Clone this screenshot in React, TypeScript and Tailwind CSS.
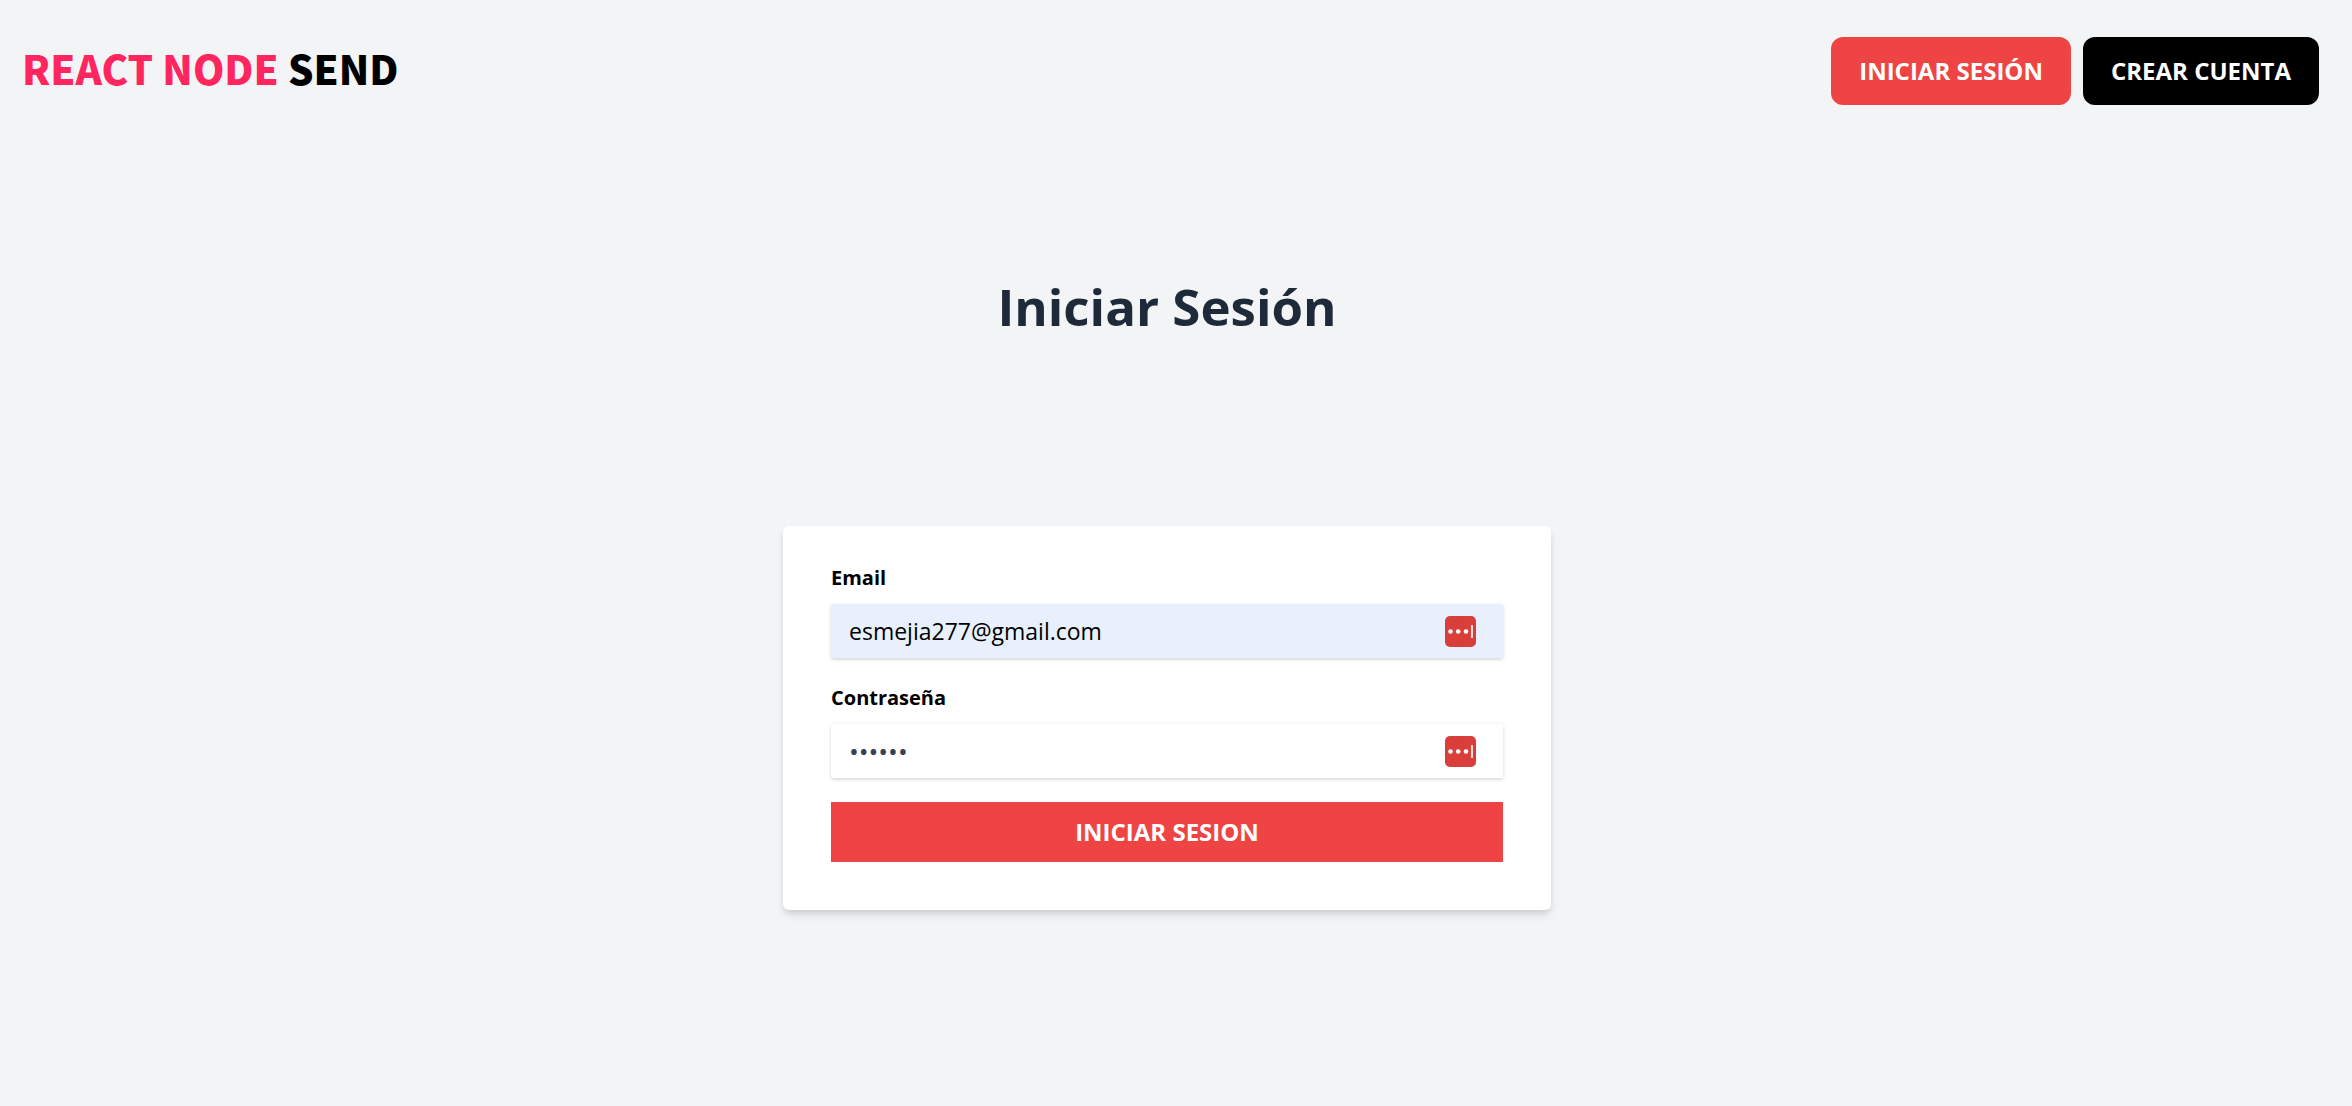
import { useState } from "react";

function PasswordManagerIcon() {
  return (
    <svg viewBox="0 0 31 31" className="size-[31px]" aria-hidden="true">
      <rect width="31" height="31" rx="5" fill="#d83f3b" />
      <circle cx="5.5" cy="15.5" r="2.3" fill="#fff" />
      <circle cx="13.2" cy="15.5" r="2.3" fill="#fff" />
      <circle cx="21" cy="15.5" r="2.3" fill="#fff" />
      <rect x="26" y="9" width="2" height="13" rx="0.6" fill="#fbdcdb" />
    </svg>
  );
}

type FieldProps = {
  id: string;
  label: string;
  type: string;
  initial: string;
  inputClass: string;
};

function Field({ id, label, type, initial, inputClass }: FieldProps) {
  const [value, setValue] = useState(initial);
  return (
    <div className="mb-6">
      <label htmlFor={id} className="mb-2.5 block text-[20px] leading-8 font-bold text-black">
        {label}
      </label>
      <div className="relative">
        <input
          id={id}
          type={type}
          value={value}
          onChange={(e) => setValue(e.target.value)}
          className={`block h-[54px] w-full rounded-xs px-[18px] shadow-[0_1px_4px_rgba(0,0,0,0.1),0_2px_3px_rgba(0,0,0,0.08)] outline-none ${inputClass}`}
        />
        <button
          type="button"
          aria-label={`Autocompletar ${label}`}
          className="absolute top-3 right-[27px]"
        >
          <PasswordManagerIcon />
        </button>
      </div>
    </div>
  );
}

export default function App() {
  return (
    <div className="min-h-screen bg-gray-100 pr-[18px] font-['Open_Sans',sans-serif]">
      <header className="flex items-start justify-between pt-[37px] pr-[15px] pl-[22px]">
        <a
          href="#"
          className="font-['Noto_Sans_CJK_JP',sans-serif] text-[40px] leading-[62px] font-black whitespace-nowrap text-[#ff2660]"
        >
          REACT NODE <span className="text-black">SEND</span>
        </a>
        <nav className="flex gap-3 text-2xl leading-9 font-bold text-white">
          <a href="#" className="rounded-xl bg-[#ef4444] px-7 py-4">
            INICIAR SESIÓN
          </a>
          <a href="#" className="rounded-xl bg-black px-7 py-4">
            CREAR CUENTA
          </a>
        </nav>
      </header>

      <main className="pt-[171px]">
        <h1 className="text-center text-[51px] leading-[60px] font-bold text-gray-800">
          Iniciar Sesión
        </h1>
        <form
          onSubmit={(e) => e.preventDefault()}
          className="mx-auto mt-[190px] max-w-3xl rounded-md bg-white px-12 pt-9 pb-12 shadow-[0_6px_9px_-1px_rgba(0,0,0,0.1),0_3px_6px_-1px_rgba(0,0,0,0.08)]"
        >
          <Field
            id="email"
            label="Email"
            type="email"
            initial="esmejia277@gmail.com"
            inputClass="bg-[#e8f0fe] text-[23px] text-black"
          />
          <Field
            id="password"
            label="Contraseña"
            type="password"
            initial="123456"
            inputClass="bg-white text-[26px] text-gray-700"
          />
          <button
            type="submit"
            className="block h-[60px] w-full bg-[#ef4444] text-2xl font-bold text-white"
          >
            INICIAR SESION
          </button>
        </form>
      </main>
    </div>
  );
}
